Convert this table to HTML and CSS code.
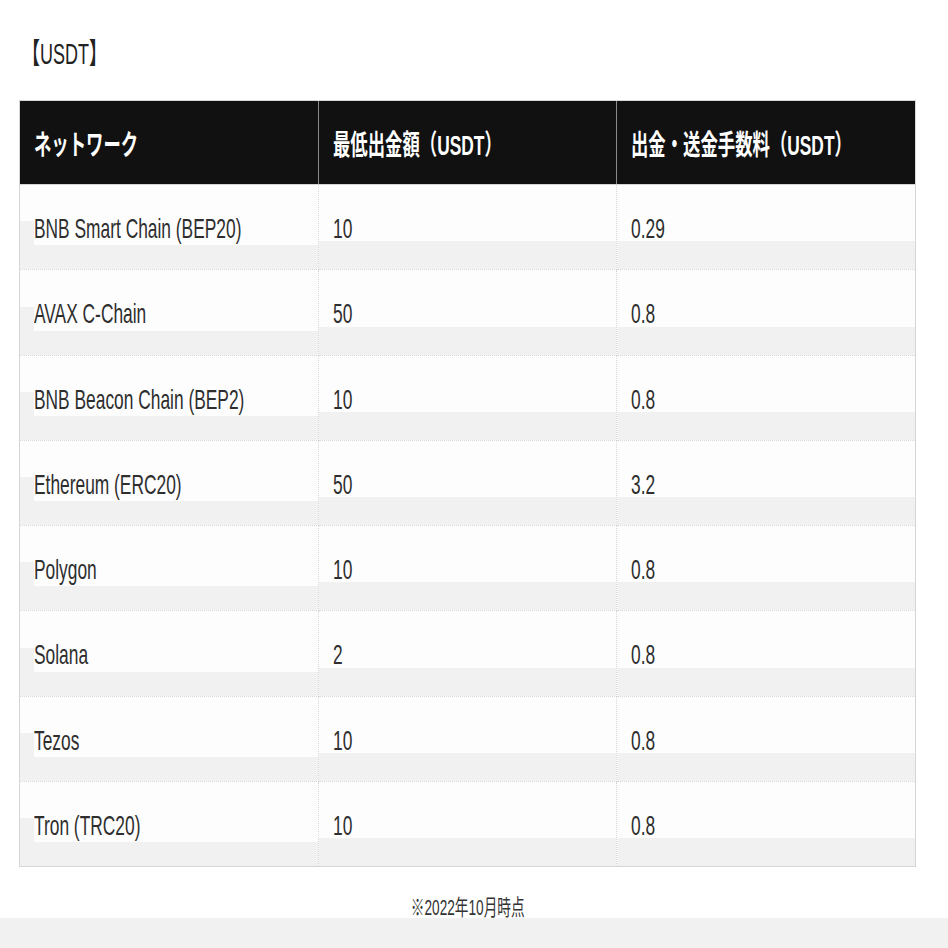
FILE: index.html
```html
<!DOCTYPE html>
<html lang="ja">
<head>
<meta charset="utf-8">
<title>USDT</title>
<link rel="stylesheet" href="styles.css">
</head>
<body>
<div class="page">
  <p class="title"><span class="sx">【USDT】</span></p>
  <table class="fees">
    <thead>
      <tr>
        <th><span class="sx">ネットワーク</span></th>
        <th><span class="sx">最低出金額（USDT）</span></th>
        <th><span class="sx">出金・送金手数料（USDT）</span></th>
      </tr>
    </thead>
    <tbody>
      <tr><td><span class="sx">BNB Smart Chain (BEP20)</span></td><td><span class="sx">10</span></td><td><span class="sx">0.29</span></td></tr>
      <tr><td><span class="sx">AVAX C-Chain</span></td><td><span class="sx">50</span></td><td><span class="sx">0.8</span></td></tr>
      <tr><td><span class="sx">BNB Beacon Chain (BEP2)</span></td><td><span class="sx">10</span></td><td><span class="sx">0.8</span></td></tr>
      <tr><td><span class="sx">Ethereum (ERC20)</span></td><td><span class="sx">50</span></td><td><span class="sx">3.2</span></td></tr>
      <tr><td><span class="sx">Polygon</span></td><td><span class="sx">10</span></td><td><span class="sx">0.8</span></td></tr>
      <tr><td><span class="sx">Solana</span></td><td><span class="sx">2</span></td><td><span class="sx">0.8</span></td></tr>
      <tr><td><span class="sx">Tezos</span></td><td><span class="sx">10</span></td><td><span class="sx">0.8</span></td></tr>
      <tr><td><span class="sx">Tron (TRC20)</span></td><td><span class="sx">10</span></td><td><span class="sx">0.8</span></td></tr>
    </tbody>
  </table>
  <p class="note"><span class="sx sx-center">※2022年10月時点</span></p>
</div>
<div class="band"></div>
</body>
</html>
```

FILE: styles.css
```css
html, body {
  margin: 0;
  padding: 0;
  background: #ffffff;
}

body {
  font-family: "Liberation Sans", Arial, "Noto Sans CJK JP", sans-serif;
  color: #2b2b2b;
}

.page {
  padding: 0 32px 0 19px;
}

.sx {
  display: inline-block;
  white-space: nowrap;
  transform: scaleX(0.62);
  transform-origin: left center;
}

.sx-center {
  transform-origin: center center;
}

.title {
  margin: 0;
  padding: 34px 0 0 3px;
  font-size: 29px;
  line-height: 40px;
  height: 40px;
  color: #222;
}

.fees {
  margin-top: 26px;
  width: 897px;
  border-collapse: collapse;
  table-layout: fixed;
  border: 1px solid #d6d6d6;
}

.fees th {
  height: 83px;
  padding: 0 14px;
  background: #111111;
  color: #ffffff;
  font-weight: bold;
  font-size: 28px;
  text-align: left;
  border-top: 1px solid #d6d6d6;
  border-bottom: 1px solid #d6d6d6;
  border-left: 1px solid #8a8a8a;
}

.fees th:first-child {
  border-left: 1px solid #d6d6d6;
}

.fees td {
  height: 80.25px;
  padding: 4px 14px 0 14px;
  font-size: 28px;
  line-height: 34px;
  color: #2e2e2e;
  border: 1px dotted #d8d8d8;
  background:
    linear-gradient(#f1f1f1, #f1f1f1) 0 100% / 100% 28px no-repeat,
    #fdfdfd;
}

.fees td:first-child {
  background:
    linear-gradient(#f1f1f1, #f1f1f1) 0 100% / 14px 48px no-repeat,
    linear-gradient(#f1f1f1, #f1f1f1) 0 100% / 100% 24px no-repeat,
    #fdfdfd;
}

.note {
  margin: 0;
  padding-top: 30px;
  text-align: center;
  font-size: 22px;
  line-height: 21px;
  color: #333;
}

.band {
  height: 40px;
  background: #f1f1f1;
}
```
